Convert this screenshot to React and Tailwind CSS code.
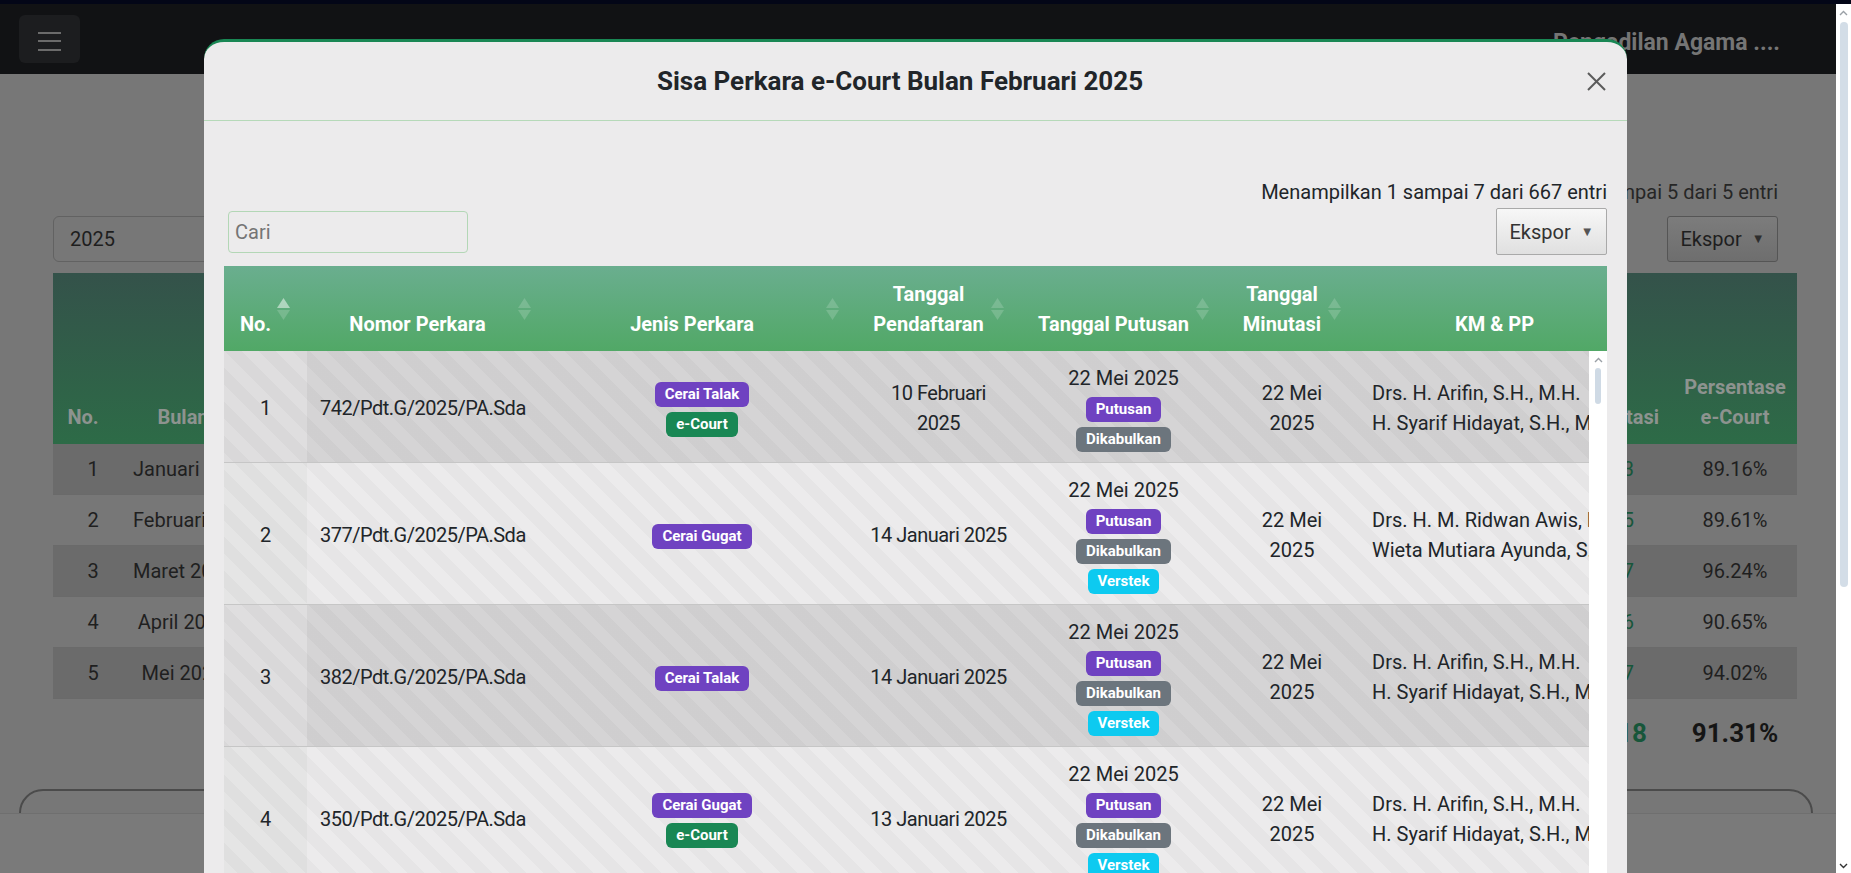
import React from "react";

const BADGE = {
  purple: "bg-[#6f42c1]",
  green: "bg-[#198754]",
  gray: "bg-[#6c757d]",
  cyan: "bg-[#0dcaf0]",
};

function Badge({ color, children }) {
  return (
    <span
      className={`inline-flex h-[25px] items-center rounded-[6px] px-[10px] text-[15px] font-bold leading-none text-white ${BADGE[color]}`}
    >
      {children}
    </span>
  );
}

function BLine({ children }) {
  return <div className="flex h-[30px] items-start justify-center pt-[4px]">{children}</div>;
}

function TLine({ children, className = "" }) {
  return <div className={`h-[30px] leading-[30px] ${className}`}>{children}</div>;
}

function SortIcon({ active }) {
  return (
    <svg
      width="13"
      height="22"
      viewBox="0 0 13 22"
      className="absolute right-[17px] top-1/2 -translate-y-1/2"
    >
      <polygon points="0,10 6.5,0 13,10" fill={active ? "rgba(255,255,255,0.5)" : "rgba(255,255,255,0.17)"} />
      <polygon points="0,12 6.5,22 13,12" fill="rgba(255,255,255,0.17)" />
    </svg>
  );
}

const PUTUSAN3 = [
  ["Putusan", "purple"],
  ["Dikabulkan", "gray"],
  ["Verstek", "cyan"],
];

const rows = [
  {
    no: 1,
    nomor: "742/Pdt.G/2025/PA.Sda",
    jenis: [
      ["Cerai Talak", "purple"],
      ["e-Court", "green"],
    ],
    daftar: ["10 Februari", "2025"],
    putus: [
      ["Putusan", "purple"],
      ["Dikabulkan", "gray"],
    ],
    km: ["Drs. H. Arifin, S.H., M.H.", "H. Syarif Hidayat, S.H., M.H."],
  },
  {
    no: 2,
    nomor: "377/Pdt.G/2025/PA.Sda",
    jenis: [["Cerai Gugat", "purple"]],
    daftar: ["14 Januari 2025"],
    putus: PUTUSAN3,
    km: ["Drs. H. M. Ridwan Awis, M.H.", "Wieta Mutiara Ayunda, S.H."],
  },
  {
    no: 3,
    nomor: "382/Pdt.G/2025/PA.Sda",
    jenis: [["Cerai Talak", "purple"]],
    daftar: ["14 Januari 2025"],
    putus: PUTUSAN3,
    km: ["Drs. H. Arifin, S.H., M.H.", "H. Syarif Hidayat, S.H., M.H."],
  },
  {
    no: 4,
    nomor: "350/Pdt.G/2025/PA.Sda",
    jenis: [
      ["Cerai Gugat", "purple"],
      ["e-Court", "green"],
    ],
    daftar: ["13 Januari 2025"],
    putus: PUTUSAN3,
    km: ["Drs. H. Arifin, S.H., M.H.", "H. Syarif Hidayat, S.H., M.H."],
  },
];

const bgRows = [
  ["1", "Januari 2025", "263", "89.16%"],
  ["2", "Februari 2025", "285", "89.61%"],
  ["3", "Maret 2025", "237", "96.24%"],
  ["4", "April 2025", "256", "90.65%"],
  ["5", "Mei 2025", "297", "94.02%"],
];

const cellBase =
  "flex flex-col justify-center pt-[12px] pb-[9px] bg-[repeating-linear-gradient(45deg,rgba(0,0,0,0.028)_0px,rgba(0,0,0,0.028)_12px,transparent_12px,transparent_24px)] bg-fixed";

function ModalTable() {
  return (
    <div className="w-[1383px]">
      {/* header */}
      <div className="grid h-[85px] grid-cols-[83px_241px_308px_165px_205px_132px_1fr] bg-[linear-gradient(180deg,#6aae8f,#51a866)] text-[20px] font-bold leading-[30px] text-white">
        <div className="relative flex flex-col items-center justify-end pb-[12px] pl-[10px] pr-[30px]">
          <span>No.</span>
          <SortIcon active />
        </div>
        <div className="relative flex flex-col items-center justify-end pb-[12px] pl-[10px] pr-[30px]">
          <span>Nomor Perkara</span>
          <SortIcon />
        </div>
        <div className="relative flex flex-col items-center justify-end pb-[12px] pl-[10px] pr-[30px]">
          <span>Jenis Perkara</span>
          <SortIcon />
        </div>
        <div className="relative flex flex-col items-center justify-end pb-[12px] pl-[10px] pr-[30px] text-center">
          <span>Tanggal</span>
          <span>Pendaftaran</span>
          <SortIcon />
        </div>
        <div className="relative flex flex-col items-center justify-end pb-[12px] pl-[10px] pr-[30px]">
          <span className="whitespace-nowrap">Tanggal Putusan</span>
          <SortIcon />
        </div>
        <div className="relative flex flex-col items-center justify-end pb-[12px] pl-[10px] pr-[30px] text-center">
          <span>Tanggal</span>
          <span>Minutasi</span>
          <SortIcon />
        </div>
        <div className="relative flex flex-col items-center justify-end pb-[12px] pl-[24px]">
          <span>KM &amp; PP</span>
        </div>
      </div>

      {/* body */}
      <div className="flex">
        <div className="w-[1365px] text-[20px] leading-[30px] text-[#212529]">
          {rows.map((r, i) => {
            const odd = i % 2 === 0;
            const rowBg = odd ? "bg-[#d5d4d5]" : "bg-[#ecebec]";
            const firstBg = odd ? "bg-[#dfdedf]" : "bg-[#e5e5e5]";
            return (
              <div
                key={r.no}
                className="grid grid-cols-[83px_241px_308px_165px_205px_132px_1fr] border-b border-[#c6c6c6]"
              >
                <div className={`${cellBase} ${firstBg} items-center`}>
                  <TLine>{r.no}</TLine>
                </div>
                <div className={`${cellBase} ${rowBg} pl-[13px]`}>
                  <TLine className="tracking-[-0.5px]">{r.nomor}</TLine>
                </div>
                <div className={`${cellBase} ${rowBg} items-center`}>
                  {r.jenis.map(([t, c]) => (
                    <BLine key={t}>
                      <Badge color={c}>{t}</Badge>
                    </BLine>
                  ))}
                </div>
                <div className={`${cellBase} ${rowBg} items-center text-center`}>
                  {r.daftar.map((t) => (
                    <TLine key={t} className="whitespace-nowrap tracking-[-0.5px]">
                      {t}
                    </TLine>
                  ))}
                </div>
                <div className={`${cellBase} ${rowBg} items-center`}>
                  <TLine className="whitespace-nowrap">22 Mei 2025</TLine>
                  {r.putus.map(([t, c]) => (
                    <BLine key={t}>
                      <Badge color={c}>{t}</Badge>
                    </BLine>
                  ))}
                </div>
                <div className={`${cellBase} ${rowBg} items-center text-center`}>
                  <TLine>22 Mei</TLine>
                  <TLine>2025</TLine>
                </div>
                <div className={`${cellBase} ${rowBg} overflow-hidden pl-[14px]`}>
                  {r.km.map((t) => (
                    <TLine key={t} className="whitespace-nowrap">
                      {t}
                    </TLine>
                  ))}
                </div>
              </div>
            );
          })}
        </div>
        {/* inner scrollbar */}
        <div className="flex w-[18px] flex-col items-center bg-white pt-[6px]">
          <svg width="9" height="6" viewBox="0 0 9 6">
            <polyline points="1,5 4.5,1.5 8,5" fill="none" stroke="#9aa0a6" strokeWidth="1.4" />
          </svg>
          <div className="mt-[5px] h-[36px] w-[6px] rounded-full bg-[#cfdae5]" />
        </div>
      </div>
    </div>
  );
}

function Modal() {
  return (
    <div className="absolute left-[204px] top-[35px] h-[900px] w-[1423px] rounded-t-[20px] border-t-[3px] border-[#198754] bg-[#ecebec]">
      {/* header */}
      <div className="flex h-[79px] items-center border-b border-[#b6d9b9] pl-[20px] pr-[21px]">
        <div className="flex-1 text-center text-[26px] font-bold leading-[39px] text-[#212529]">
          Sisa Perkara e-Court Bulan Februari 2025
        </div>
        <svg width="19" height="19" viewBox="0 0 19 19" className="ml-[11px]">
          <line x1="1" y1="1" x2="18" y2="18" stroke="#5a5a5a" strokeWidth="2" />
          <line x1="18" y1="1" x2="1" y2="18" stroke="#5a5a5a" strokeWidth="2" />
        </svg>
      </div>
      {/* body */}
      <div className="px-[20px] pt-[56px]">
        <div className="h-[30px] text-right text-[20px] leading-[30px] text-[#212529]">
          Menampilkan 1 sampai 7 dari 667 entri
        </div>
        <div className="mt-[1px] flex h-[47px] items-center justify-between">
          <div className="ml-[4px] flex h-[42px] w-[240px] items-center rounded-[4px] border border-[#b3d7b6] pl-[6px] text-[20px] text-[#757575]">
            Cari
          </div>
          <div className="flex h-[47px] w-[111px] items-center justify-center gap-[10px] rounded-[2px] border border-[#a9a9a9] bg-[linear-gradient(180deg,#f7f7f7,#e0e0e0)] text-[20px] text-[#333]">
            <span>Ekspor</span>
            <span className="text-[13px] text-[#555]">▼</span>
          </div>
        </div>
        <div className="mt-[11px]">
          <ModalTable />
        </div>
      </div>
    </div>
  );
}

function BackgroundPage() {
  return (
    <>
      {/* navbar */}
      <div className="flex h-[70px] items-center justify-between bg-[#111214] pl-[19px] pr-[56px]">
        <div className="flex h-[48px] w-[61px] flex-col items-center justify-center gap-[6.5px] rounded-[6px] bg-[#1c1d1f] pt-[4px]">
          <div className="h-[2px] w-[23px] bg-[#6b6b6b]" />
          <div className="h-[2px] w-[23px] bg-[#6b6b6b]" />
          <div className="h-[2px] w-[23px] bg-[#6b6b6b]" />
        </div>
        <div className="mt-[8px] text-[23px] font-bold text-[#757575]">Pengadilan Agama ....</div>
      </div>

      <div className="pl-[53px] pr-[39px]">
        <div className="mt-[103px] h-[30px] pr-[19px] text-right leading-[30px] text-[#262626]">
          Menampilkan 1 sampai 5 dari 5 entri
        </div>
        <div className="mt-[9px] flex h-[46px] items-center justify-between pr-[19px]">
          <div className="flex h-[46px] w-[320px] items-center rounded-[6px] border border-[#626262] pl-[16px] text-[#1e1e1e]">
            2025
          </div>
          <div className="flex h-[46px] w-[111px] items-center justify-center gap-[10px] rounded-[3px] border border-[#555] bg-[linear-gradient(180deg,#7c7c7c,#6e6e6e)] text-[#1e1e1e]">
            <span>Ekspor</span>
            <span className="text-[13px] text-[#2e2e2e]">▼</span>
          </div>
        </div>

        {/* background table */}
        <div className="mt-[11px]">
          <div className="grid h-[171px] grid-cols-[80px_100px_1fr_120px_124px] bg-[linear-gradient(180deg,#34524a,#2d6b47)] font-bold leading-[30px] text-[#8d938f]">
            <div className="flex flex-col items-center justify-end pb-[12px] pr-[20px]">No.</div>
            <div className="flex flex-col items-center justify-end pb-[12px]">Bulan</div>
            <div />
            <div className="flex flex-col items-end justify-end pb-[12px] pr-[14px]">Minutasi</div>
            <div className="flex flex-col items-center justify-end pb-[12px] text-center">
              <span>Persentase</span>
              <span>e-Court</span>
            </div>
          </div>
          {bgRows.map((r, i) => (
            <div
              key={r[0]}
              className={`grid h-[51px] grid-cols-[80px_100px_1fr_120px_124px] items-center border-b border-[#6a6a6a] leading-[30px] text-[#1f1f1f] ${
                i % 2 === 0 ? "bg-[#6b6b6b]" : "bg-[#777777]"
              }`}
            >
              <div className="text-center">{r[0]}</div>
              <div className="whitespace-nowrap text-center">{r[1]}</div>
              <div />
              <div className="pr-[39px] text-right text-[#17563a]">{r[2]}</div>
              <div className="text-center">{r[3]}</div>
            </div>
          ))}
          <div className="grid h-[68px] grid-cols-[80px_100px_1fr_120px_124px] items-center text-[26px] font-bold">
            <div />
            <div />
            <div />
            <div className="pr-[26px] text-right text-[#17563a]">1418</div>
            <div className="text-center text-[#151515]">91.31%</div>
          </div>
        </div>
      </div>

      <div className="ml-[19px] mt-[22px] h-[200px] w-[1794px] rounded-[24px] border-2 border-[#4b4b4b]" />

      {/* fixed bottom bar */}
      <div className="absolute bottom-0 left-0 h-[60px] w-full border-t border-[#6f6f6f] bg-[#7a7a7a]" />
    </>
  );
}

export default function App() {
  return (
    <div className="h-[873px] w-[1851px] overflow-hidden bg-[#777777] font-[family-name:Roboto,sans-serif] text-[20px] leading-[30px]">
      <div className="h-[4px] bg-[#030617]" />
      <div className="flex h-[869px]">
        <div className="relative h-full w-[1836px] overflow-hidden bg-[#777777]">
          <BackgroundPage />
          <Modal />
        </div>
        {/* page scrollbar */}
        <div className="flex h-full w-[15px] flex-col items-center bg-white pt-[6px]">
          <svg width="9" height="6" viewBox="0 0 9 6">
            <polyline points="1,5 4.5,1.5 8,5" fill="none" stroke="#9aa0a6" strokeWidth="1.4" />
          </svg>
          <div className="mt-[6px] h-[565px] w-[8px] rounded-full bg-[#d3dde7]" />
          <div className="flex-1" />
          <svg width="9" height="6" viewBox="0 0 9 6" className="mb-[4px]">
            <polyline points="1,1 4.5,4.5 8,1" fill="none" stroke="#333" strokeWidth="1.4" />
          </svg>
        </div>
      </div>
    </div>
  );
}
